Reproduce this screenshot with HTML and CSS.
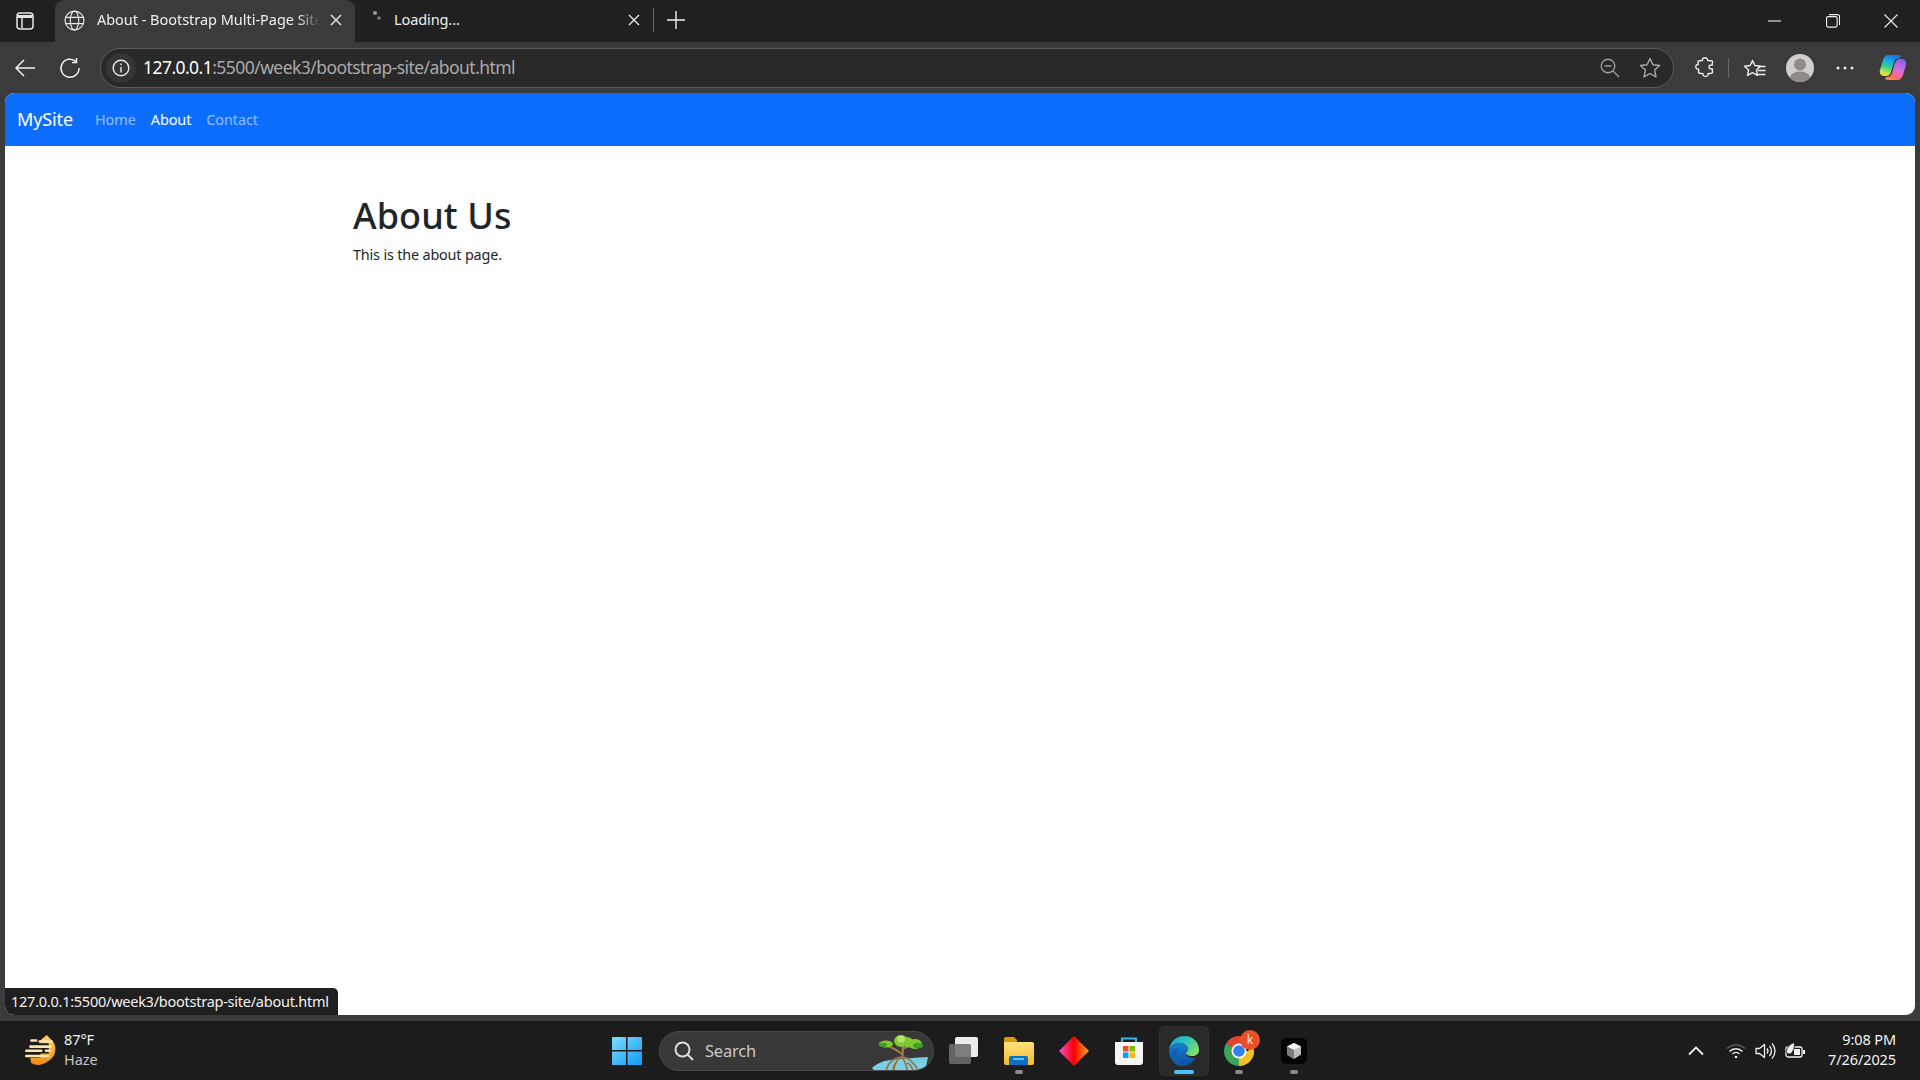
FILE: index.html
```html
<!DOCTYPE html>
<html lang="en">
<head>
<meta charset="utf-8">
<title>About - Bootstrap Multi-Page Site</title>
<link rel="stylesheet" href="styles.css">
</head>
<body>
<div class="tabstrip">
  <div class="btn side">
    <svg width="20" height="20" viewBox="0 0 20 20" fill="none" stroke="#e6e6e6" stroke-width="1.5"><rect x="2" y="2" width="16" height="16" rx="3"/><path d="M2.5 5.500h15" stroke-width="3"/><path d="M7 7v10"/></svg>
  </div>
  <div class="tab active">
    <svg class="globe" width="21" height="21" viewBox="0 0 20 20" fill="none" stroke="#e8e8e8" stroke-width="1.1"><circle cx="10" cy="10" r="9"/><ellipse cx="10" cy="10" rx="4" ry="9"/><path d="M1.500 7h17M1.500 13h17"/></svg>
    <span class="tab-title">About - Bootstrap Multi-Page Site</span>
    <svg class="tab-x" width="12" height="12" viewBox="0 0 12 12" stroke="#e8e8e8" stroke-width="1.4"><path d="M1 1l10 10M11 1L1 11"/></svg>
  </div>
  <div class="tab loading">
    <svg class="spin" width="12" height="14" viewBox="0 0 12 14"><circle cx="3" cy="3" r="2" fill="#9a9a9a"/><circle cx="7" cy="8" r="1.800" fill="#777"/></svg>
    <span class="tab-title plain">Loading...</span>
    <svg class="tab-x" width="12" height="12" viewBox="0 0 12 12" stroke="#e8e8e8" stroke-width="1.4"><path d="M1 1l10 10M11 1L1 11"/></svg>
  </div>
  <div class="tab-sep"></div>
  <div class="btn plus">
    <svg width="18" height="18" viewBox="0 0 18 18" stroke="#f0f0f0" stroke-width="1.4"><path d="M9 0v18M0 9h18"/></svg>
  </div>
  <div class="spacer"></div>
  <div class="winbtn"><svg width="14" height="14" viewBox="0 0 14 14" stroke="#f0f0f0" stroke-width="1.1"><path d="M0 7h13"/></svg></div>
  <div class="winbtn"><svg width="14" height="14" viewBox="0 0 14 14" fill="none" stroke="#f0f0f0" stroke-width="1.1"><rect x=".6" y="2.6" width="10.5" height="10.5" rx="1.5"/><path d="M3 .6h8.500a2 2 0 0 1 2 2V11"/></svg></div>
  <div class="winbtn"><svg width="14" height="14" viewBox="0 0 14 14" stroke="#f0f0f0" stroke-width="1.1"><path d="M.5.5l13 13M13.500.5l-13 13"/></svg></div>
</div>

<div class="toolbar">
  <div class="tbtn">
    <svg width="22" height="20" viewBox="0 0 22 20" fill="none" stroke="#f0f0f0" stroke-width="1.5"><path d="M21 10H2M10 2l-8 8 8 8"/></svg>
  </div>
  <div class="tbtn">
    <svg width="22" height="22" viewBox="0 0 22 22" fill="none" stroke="#f0f0f0" stroke-width="1.5"><path d="M17 4.500A9 9 0 1 0 20 11"/><path d="M17.500 1v4.500H13"/></svg>
  </div>
  <div class="address">
    <div class="info">
      <svg width="18" height="18" viewBox="0 0 18 18" fill="none" stroke="#e8e8e8" stroke-width="1.4"><circle cx="9" cy="9" r="7.800"/><path d="M9 8v5.500"/><path d="M9 4.500v1.800"/></svg>
    </div>
    <span class="url"><span class="url-host">127.0.0.1</span>:5500/week3/bootstrap-site/about.html</span>
    <div class="spacer"></div>
    <div class="addr-icon">
      <svg width="20" height="20" viewBox="0 0 20 20" fill="none" stroke="#9a9a9a" stroke-width="1.4"><circle cx="8" cy="8" r="6.800"/><path d="M4.500 8h7M13 13l6 6"/></svg>
    </div>
    <div class="addr-icon">
      <svg width="22" height="22" viewBox="0 0 22 22" fill="none" stroke="#a8a8a8" stroke-width="1.4" stroke-linejoin="round"><path d="M11 1.500l2.900 6.200 6.700.8-5 4.600 1.400 6.700L11 16.500l-6 3.300 1.400-6.700-5-4.600 6.700-.8z"/></svg>
    </div>
  </div>
  <div class="tbtn">
    <svg width="20" height="21" viewBox="0 0 20 21" fill="none" stroke="#ececec" stroke-width="1.4" stroke-linejoin="round"><path d="M7.500 3.500C7 1.500 8.500.8 10 .8s3 .9 2.500 2.700l4 .3c.7 0 1 .5 1 1l-.3 3.500c-1.500-.5-3.200-.2-3.200 1.700s1.700 2.200 3.200 1.700l.3 3.500c0 .7-.4 1.100-1 1.100l-3.500.3c.5 1.500-.8 2.900-2.500 2.900s-3-1.400-2.500-2.900l-3.500-.3c-.7 0-1-.5-1-1.100l.2-3C1.800 12.500.8 11.200.8 9.800s1-2.700 2.400-2.300l-.2-2.800c0-.7.4-1 1-1z"/></svg>
  </div>
  <div class="tool-sep"></div>
  <div class="tbtn fav">
    <svg width="22" height="20" viewBox="0 0 22 20" fill="none" stroke="#ececec" stroke-width="1.4" stroke-linejoin="round"><path d="M10 1.500l2.400 5 5.600.7-4.100 3.700 1.100 5.500-5-2.800-5 2.800 1.100-5.500L2 7.200l5.600-.7z" transform="translate(-1.500 1)"/><path d="M14 8.500h7.500M14 12.500h7.500M14 16.500h7.500" stroke-width="1.300"/></svg>
  </div>
  <div class="tbtn">
    <svg width="28" height="28" viewBox="0 0 28 28"><defs><clipPath id="av"><circle cx="14" cy="14" r="14"/></clipPath></defs><circle cx="14" cy="14" r="14" fill="#d0cfcb"/><g clip-path="url(#av)" fill="#8f8c88"><circle cx="14" cy="10.500" r="6"/><ellipse cx="14" cy="25" rx="11" ry="7.500"/></g></svg>
  </div>
  <div class="tbtn">
    <svg width="18" height="4" viewBox="0 0 18 4" fill="#ececec"><circle cx="2" cy="2" r="1.500"/><circle cx="9" cy="2" r="1.500"/><circle cx="16" cy="2" r="1.500"/></svg>
  </div>
  <div class="tbtn copilot">
    <svg width="28" height="27" viewBox="0 0 28 27">
      <defs>
        <linearGradient id="cp1" x1="0.600" y1="0" x2="0.300" y2="1"><stop offset="0" stop-color="#1a6fe8"/><stop offset=".3" stop-color="#18a9e6"/><stop offset=".6" stop-color="#3bd28a"/><stop offset=".85" stop-color="#bfe04a"/><stop offset="1" stop-color="#f5d63d"/></linearGradient>
        <linearGradient id="cp2" x1="0.700" y1="0" x2="0.300" y2="1"><stop offset="0" stop-color="#7f62ee"/><stop offset=".45" stop-color="#d56de0"/><stop offset=".8" stop-color="#f8697c"/><stop offset="1" stop-color="#ff7f3c"/></linearGradient>
      </defs>
      <path d="M9 1h10c3 0 3 2 2 3-3 0-5 1-6 4l-3 10c-1 3-3 4-5 4H5c-3 0-5-3-4-6L4 6c1-3 3-5 5-5z" fill="url(#cp1)"/>
      <path d="M19 26H9c-3 0-3-2-2-3 3 0 5-1 6-4l3-10c1-3 3-4 5-4h2c3 0 5 3 4 6l-3 10c-1 3-3 5-5 5z" fill="url(#cp2)"/>
    </svg>
  </div>
</div>

<main class="page">
  <nav class="navbar">
    <a class="brand">MySite</a>
    <a class="nav-link">Home</a>
    <a class="nav-link current">About</a>
    <a class="nav-link">Contact</a>
  </nav>
  <section class="container">
    <h1 class="heading">About Us</h1>
    <p class="lead">This is the about page.</p>
  </section>
  <div class="status">127.0.0.1:5500/week3/bootstrap-site/about.html</div>
</main>

<footer class="taskbar">
  <div class="weather">
    <svg width="33" height="31" viewBox="0 0 32 30">
      <defs><linearGradient id="sun" x1="0" y1="0" x2="0" y2="1"><stop offset="0" stop-color="#ffd45e"/><stop offset="1" stop-color="#ee8a16"/></linearGradient></defs>
      <path d="M22 0l4 4a13 13 0 0 1-2 21 14 14 0 0 1-17 2L6 22h10v-4h8V8h-8V5z" fill="url(#sun)"/>
      <g fill="#fbe3ac"><rect x="6" y="4" width="7" height="2.500" rx="1.200"/><rect x="14" y="5" width="14" height="2.500" rx="1.200"/><rect x="5" y="10" width="22" height="2.500" rx="1.200"/><rect x="1" y="14" width="17" height="2.500" rx="1.200"/><rect x="20" y="14" width="7" height="2.500" rx="1.200"/><rect x="1" y="19" width="24" height="2.500" rx="1.200"/></g>
    </svg>
    <div class="weather-text"><div class="temp">87°F</div><div class="cond">Haze</div></div>
  </div>
  <div class="center">
    <div class="item start">
      <svg width="30" height="30" viewBox="0 0 30 30"><defs><linearGradient id="win" x1="0" y1="0" x2="1" y2="1"><stop offset="0" stop-color="#7fdcff"/><stop offset="1" stop-color="#0f9bf2"/></linearGradient></defs><path d="M1 1h13v13H0V2a1 1 0 0 1 1-1zM15.500 1H29a1 1 0 0 1 1 1v12H15.500zM0 15.500h14V29H1a1 1 0 0 1-1-1zM15.500 15.500H30V28a1 1 0 0 1-1 1H15.500z" fill="url(#win)"/></svg>
    </div>
    <div class="search">
      <svg width="20" height="20" viewBox="0 0 20 20" fill="none" stroke="#dcdcdc" stroke-width="2"><circle cx="8.500" cy="8.500" r="7"/><path d="M13.500 13.500l5.500 5.500"/></svg>
      <span class="search-text">Search</span>
      <svg class="tree" width="62" height="38" viewBox="0 0 62 38">
        <path d="M2 35c4-4 10-7 18-8 14-2 26-2 38-3l-3 14H5z" fill="#79cfe6"/>
        <g fill="none" stroke="#a9784a" stroke-width="2"><path d="M33 10c-1 6 1 10-1 15M32 21c-4-3-8-6-14-8M32 17c2-3 5-3 9-4"/></g>
        <g fill="none" stroke="#a0703f" stroke-width="1.700"><path d="M32 24c-7 0-14 5-16 14M32 24c-3 0-8 6-8 14M32 24c2 3 5 8 5 14M32 24c6 0 13 6 16 14M27 29c-3 2-4 5-4 9M37 30c3 1 5 4 6 8"/></g>
        <g fill="#7ec832"><ellipse cx="31" cy="8" rx="7" ry="6"/><ellipse cx="37" cy="9" rx="6" ry="5"/><ellipse cx="45" cy="11" rx="7" ry="5"/><ellipse cx="16" cy="11" rx="7" ry="3.500"/></g>
        <ellipse cx="13" cy="12" rx="4" ry="2.200" fill="#3f9c2a"/><ellipse cx="48" cy="12.500" rx="5" ry="2.800" fill="#3f9c2a"/><ellipse cx="31" cy="6" rx="4" ry="3.500" fill="#b6e36a"/>
      </svg>
    </div>
    <div class="item">
      <svg width="30" height="28" viewBox="0 0 30 28"><rect x="6" y="0" width="23" height="20" rx="2" fill="#ececec"/><rect x="0" y="7" width="22" height="20" rx="2" fill="#6d6d6d" fill-opacity=".88"/></svg>
    </div>
    <div class="item running">
      <svg width="30" height="28" viewBox="0 0 30 28"><defs><linearGradient id="fold" x1="0" y1="0" x2="0" y2="1"><stop offset="0" stop-color="#ffe27a"/><stop offset="1" stop-color="#f7b92c"/></linearGradient></defs><path d="M0 2a2 2 0 0 1 2-2h8l3 3v3H0z" fill="#d99a09"/><path d="M0 5h28a2 2 0 0 1 2 2v19a2 2 0 0 1-2 2H2a2 2 0 0 1-2-2z" fill="url(#fold)"/><path d="M5 28v-7a2 2 0 0 1 2-2h15a2 2 0 0 1 2 2v7z" fill="#0f6fc6"/><rect x="9" y="21" width="11" height="2" fill="#5fc1f2"/></svg>
    </div>
    <div class="item">
      <svg width="30" height="30" viewBox="0 0 30 30"><defs><linearGradient id="dia" x1="0" y1="0" x2="1" y2="0"><stop offset="0" stop-color="#ff4fd0"/><stop offset=".5" stop-color="#f80000"/><stop offset="1" stop-color="#ffa62b"/></linearGradient></defs><path d="M15 0l15 15-15 15L0 15z" fill="url(#dia)"/></svg>
    </div>
    <div class="item">
      <svg width="30" height="30" viewBox="0 0 30 30"><path d="M8 8V2.500h14V8" fill="none" stroke="#35b6ef" stroke-width="2.200"/><path d="M1 6h28v20a3 3 0 0 1-3 3H4a3 3 0 0 1-3-3z" fill="#f4f4f4"/><rect x="9" y="10" width="5.500" height="5.500" fill="#f25022"/><rect x="15.500" y="10" width="5.500" height="5.500" fill="#7fba00"/><rect x="9" y="16.500" width="5.500" height="5.500" fill="#00a4ef"/><rect x="15.500" y="16.500" width="5.500" height="5.500" fill="#ffb900"/></svg>
    </div>
    <div class="item selected">
      <svg width="30" height="30" viewBox="0 0 30 30"><defs><linearGradient id="edge1" x1="0" y1="0" x2="1" y2=".6"><stop offset="0" stop-color="#1a9fd8"/><stop offset=".55" stop-color="#2dc3b8"/><stop offset="1" stop-color="#7fe06a"/></linearGradient><linearGradient id="edge2" x1="0" y1="0" x2="0" y2="1"><stop offset="0" stop-color="#1a7fd0"/><stop offset="1" stop-color="#0c4fa0"/></linearGradient></defs><path d="M15 0c9 0 15 6 15 14 0 4-3 6-7 6-3 0-6-1-6-3 0-1 2-2 2-4 0-3-4-6-9-6C6 7 1 10 0 14 1 6 7 0 15 0z" fill="url(#edge1)"/><path d="M0 14c1-4 6-7 10-7 5 0 9 3 9 6 0 2-2 3-2 4 0 2 1 4 5 5 2 1 4 0 5-1-3 5-7 9-12 9C7 30 0 24 0 14z" fill="url(#edge2)"/><path d="M8 29c-4-3-6-8-5-12 1-3 5-5 8-4-3 1-4 4-4 7 0 4 3 8 8 10-3 .500-5 0-7-1z" fill="#125fb0"/></svg>
    </div>
    <div class="item running">
      <svg width="30" height="30" viewBox="0 0 30 30"><path d="M15 15L2.010 7.500A15 15 0 0 1 27.990 7.500z" fill="#e4432f"/><path d="M15 15h15a15 15 0 0 1-15 15z" fill="#f6c026"/><path d="M15 15v15A15 15 0 0 1 2.010 7.500z" fill="#3aa655"/><path d="M27.990 7.500A15 15 0 0 1 15 30l7-11z" fill="#f6c026"/><circle cx="15" cy="15" r="7.500" fill="#fff"/><circle cx="15" cy="15" r="5.800" fill="#2f7fec"/></svg>
      <span class="badge">k</span>
    </div>
    <div class="item running">
      <svg width="26" height="26" viewBox="0 0 26 26"><rect width="26" height="26" rx="5" fill="#050505"/><path d="M13 5l7 3.500v8L13 21l-7-4.500v-8z" fill="#bdbdbd"/><path d="M13 5l7 3.500-7 3.500-7-3.500z" fill="#f2f2f2"/><path d="M13 12v9l-7-4.500v-8z" fill="#7d7d7d"/></svg>
    </div>
  </div>
  <div class="tray">
    <svg class="chev" width="16" height="10" viewBox="0 0 16 10" fill="none" stroke="#f0f0f0" stroke-width="1.800"><path d="M1 8.500l7-7 7 7"/></svg>
    <svg class="wifi" width="20" height="16" viewBox="0 0 20 16" fill="none" stroke="#f0f0f0" stroke-width="1.400"><path d="M1 5.500a13 13 0 0 1 18 0" stroke="#666"/><path d="M3.500 8.500a9 9 0 0 1 13 0M6.500 11a5 5 0 0 1 7 0"/><circle cx="10" cy="14" r="1.300" fill="#f0f0f0" stroke="none"/></svg>
    <svg class="vol" width="21" height="18" viewBox="0 0 21 18" fill="none" stroke="#f0f0f0" stroke-width="1.300"><path d="M1 6.500h3.500L9.500 2.500v13L4.500 11.500H1z" stroke-linejoin="round"/><path d="M12 6.500a4 4 0 0 1 0 5M14.500 4a7.500 7.500 0 0 1 0 10M17 1.500a11 11 0 0 1 0 15"/></svg>
    <svg class="batt" width="21" height="18" viewBox="0 0 21 18" fill="none" stroke="#f0f0f0" stroke-width="1.300"><rect x="1" y="5" width="16" height="10" rx="2"/><path d="M19 8v4" stroke-width="2"/><path d="M1 10C2 5 5 2 9 .5c1 4 0 8-3 11-2 1-4 0-5-1.500z" fill="#f0f0f0" stroke="#1c1c1c" stroke-width=".8"/><rect x="9" y="7" width="6" height="6" fill="#f0f0f0" stroke="none"/></svg>
    <div class="clock"><div>9:08 PM</div><div>7/26/2025</div></div>
  </div>
</footer>
</body>
</html>
```

FILE: styles.css
```css
* { box-sizing: border-box; }
html, body { margin: 0; height: 100%; }
body {
  width: 1920px;
  height: 1080px;
  overflow: hidden;
  display: flex;
  flex-direction: column;
  background: #3b3b3b;
  font-family: "Noto Sans", "Open Sans", sans-serif;
  color: #fff;
}
.spacer { flex: 1; }

/* tab strip */
.tabstrip {
  height: 42px;
  flex: none;
  display: flex;
  align-items: stretch;
  background: #202020;
}
.btn { display: flex; align-items: center; justify-content: center; }
.side { width: 55px; padding-right: 6px; }
.tab {
  display: flex;
  align-items: center;
  padding-bottom: 2px;
  font-size: 14.500px;
  letter-spacing: -0.03px;
  color: #eee;
}
.tab.active {
  width: 300px;
  padding: 0 13px 2px 9px;
  background: #3b3b3b;
  border-radius: 9px 9px 0 0;
}
.tab.loading { width: 298px; padding: 0 13px 2px 17px; letter-spacing: -0.1px; }
.globe { flex: none; margin-right: 12px; }
.spin { flex: none; margin: -6px 10px 0 0; align-self: center; }
.tab-title {
  flex: 1;
  padding-bottom: 2px;
  white-space: nowrap;
  overflow: hidden;
  -webkit-mask-image: linear-gradient(to right, #000 90%, transparent);
  mask-image: linear-gradient(to right, #000 90%, transparent);
}
.tab-title.plain { -webkit-mask-image: none; mask-image: none; }
.tab-x { flex: none; margin-left: 10px; }
.tab-sep { width: 1px; height: 24px; margin-top: 8px; background: #6a6a6a; }
.plus { width: 44px; padding-bottom: 2px; }
.winbtn { width: 58px; display: flex; align-items: center; justify-content: center; }

/* toolbar */
.toolbar {
  height: 51px;
  flex: none;
  display: flex;
  align-items: center;
  padding: 0 5px 0 2px;
  background: #3b3b3b;
}
.tbtn { width: 45px; height: 40px; flex: none; display: flex; align-items: center; justify-content: center; }
.address {
  flex: 1;
  height: 40px;
  margin: 0 8px 0 8px;
  padding: 0 3px 0 5px;
  display: flex;
  align-items: center;
  background: #292929;
  border: 1.500px solid #5c5c5c;
  border-radius: 20px;
}
.info {
  width: 30px;
  height: 30px;
  border-radius: 50%;
  background: #353535;
  display: flex;
  align-items: center;
  justify-content: center;
}
.url {
  margin-left: 7px;
  padding-bottom: 2px;
  font-size: 17.500px;
  letter-spacing: -0.55px;
  color: #a9a9a9;
  white-space: nowrap;
}
.url-host { color: #fff; }
.addr-icon { width: 40px; display: flex; align-items: center; justify-content: center; }
.tool-sep { width: 1px; height: 20px; flex: none; margin-left: 1px; background: #686868; }
.fav { margin-left: 3px; }
.copilot { margin-left: 3px; }

/* page */
.page {
  position: relative;
  flex: 1;
  margin: 0 5px 6px;
  background: #fff;
  border-radius: 9px;
  overflow: hidden;
  color: #212529;
}
.navbar {
  height: 53px;
  padding: 0 0 2px 12px;
  display: flex;
  align-items: center;
  background: #0d6efd;
}
.brand { font-size: 18px; color: #fff; margin-right: 22px; letter-spacing: -0.12px; }
.nav-link { font-size: 14.500px; color: rgba(255, 255, 255, .55); margin-right: 15px; letter-spacing: -0.12px; }
.nav-link.current { color: #fff; }
.container { padding: 48px 0 0 348px; }
.heading { margin: 0 0 7px; font-size: 36px; font-weight: 500; line-height: 43px; letter-spacing: 0.1px; color: #212529; }
.lead { margin: 0; font-size: 14.400px; line-height: 22px; letter-spacing: -0.17px; }
.status {
  position: absolute;
  left: 0;
  bottom: 0;
  width: 333px;
  height: 27px;
  padding: 0 0 2px 6px;
  display: flex;
  align-items: center;
  background: #1f1f1f;
  border-radius: 0 5px 0 0;
  color: #f2f2f2;
  font-size: 14.500px;
  letter-spacing: -0.25px;
  white-space: nowrap;
}

/* taskbar */
.taskbar {
  height: 59px;
  flex: none;
  display: grid;
  grid-template-columns: 1fr auto 1fr;
  align-items: center;
  background: #1c1c1c;
}
.weather { display: flex; align-items: center; padding-left: 24px; }
.weather-text { margin-left: 7px; padding-bottom: 3px; font-size: 14.500px; line-height: 20px; letter-spacing: -0.1px; }
.temp { color: #f2f2f2; }
.cond { color: #c4c4c4; }
.center { display: flex; align-items: center; }
.item {
  position: relative;
  width: 50px;
  height: 50px;
  margin-right: 5px;
  display: flex;
  align-items: center;
  justify-content: center;
  border-radius: 6px;
}
.item:last-child { margin-right: 0; }
.item.start { padding-left: 2px; }
.item.running::after {
  content: "";
  position: absolute;
  left: 21px;
  bottom: 2px;
  width: 8px;
  height: 4px;
  border-radius: 2px;
  background: #8a8a8a;
}
.item.selected { background: #2a2a2a; box-shadow: inset 0 0 0 1px #303030; }
.item.selected::after {
  content: "";
  position: absolute;
  left: 15px;
  bottom: 2px;
  width: 20px;
  height: 4px;
  border-radius: 2px;
  background: #4cc2ff;
}
.badge {
  position: absolute;
  left: 26px;
  top: 4px;
  width: 20px;
  height: 20px;
  border-radius: 50%;
  background: #e8502a;
  color: #ffe9df;
  font-size: 12px;
  line-height: 20px;
  text-align: center;
}
.search {
  position: relative;
  width: 275px;
  height: 40px;
  margin: 0 5px 0 3px;
  padding-left: 14px;
  display: flex;
  align-items: center;
  background: #383838;
  border: 1px solid #4a4a4a;
  border-radius: 20px;
  overflow: hidden;
}
.search-text { margin-left: 11px; font-size: 16.500px; letter-spacing: -0.2px; color: #c8c8c8; }
.tree { position: absolute; right: 1px; bottom: -1px; }
.tray { display: flex; align-items: center; justify-content: flex-end; padding-right: 24px; }
.chev { margin-right: 22px; }
.wifi { margin-right: 9px; }
.vol { margin-right: 9px; }
.batt { margin-right: 0; }
.clock { width: 90px; padding-bottom: 3px; text-align: right; font-size: 14.500px; line-height: 20px; letter-spacing: -0.1px; color: #f2f2f2; }
```
